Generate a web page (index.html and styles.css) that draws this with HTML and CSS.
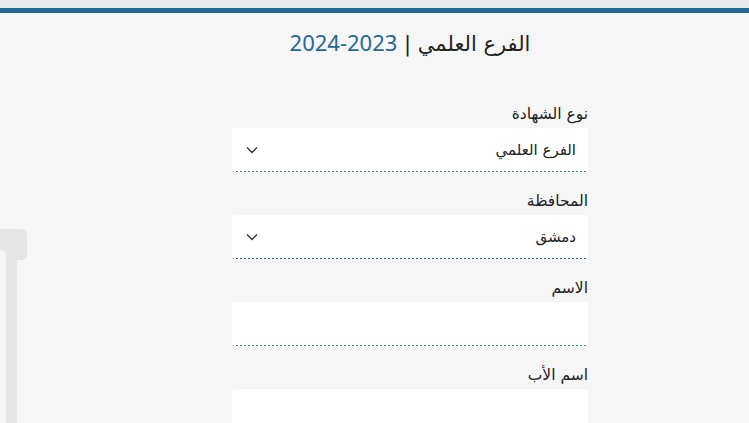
FILE: index.html
```html
<!DOCTYPE html>
<html lang="ar" dir="rtl">
<head>
<meta charset="utf-8">
<link rel="stylesheet" href="styles.css">
</head>
<body>
<div class="topstrip"></div>
<div class="bluebar"></div>
<svg class="deco" width="30" height="200" viewBox="0 229 30 200" aria-hidden="true">
  <path d="M0 229 H21 Q27 229 27 235 V254 Q27 260 21 260 H17 V429 H6 V256 Q6 250 0 250 Z" fill="#e6e6e6"/>
</svg>
<div class="page">
  <main class="column">
    <h1 class="title">الفرع العلمي | <span class="year">2023-2024</span></h1>
    <form class="form">
      <div class="field">
        <label class="label">نوع الشهادة</label>
        <div class="box select blue">
          <span class="value">الفرع العلمي</span>
          <svg class="chev" width="12" height="8" viewBox="0 0 12 8"><path d="M1 1.5 L6 6.5 L11 1.5" fill="none" stroke="#333" stroke-width="1.3"/></svg>
        </div>
      </div>
      <div class="field">
        <label class="label">المحافظة</label>
        <div class="box select dark">
          <span class="value">دمشق</span>
          <svg class="chev" width="12" height="8" viewBox="0 0 12 8"><path d="M1 1.5 L6 6.5 L11 1.5" fill="none" stroke="#333" stroke-width="1.3"/></svg>
        </div>
      </div>
      <div class="field">
        <label class="label">الاسم</label>
        <div class="box blue"></div>
      </div>
      <div class="field">
        <label class="label">اسم الأب</label>
        <div class="box"></div>
      </div>
    </form>
  </main>
</div>
</body>
</html>
```
FILE: styles.css
```css
html, body {
  margin: 0;
  padding: 0;
}
body {
  background: #f6f6f6;
  font-family: "DejaVu Sans", "Noto Sans", sans-serif;
  color: #222;
  overflow: hidden;
  height: 423px;
}
.topstrip {
  height: 8px;
  background: #e8e8e8;
}
.bluebar {
  height: 5px;
  background: #236796;
}
.deco {
  position: absolute;
  left: 0;
  top: 229px;
  display: block;
}
.page {
  display: flex;
  justify-content: center;
  padding-left: 71px;
}
.column {
  width: 356px;
}
.title {
  margin: 14px 0 0;
  font-size: 21px;
  font-weight: 400;
  line-height: 30px;
  height: 30px;
  text-align: center;
  color: #222;
}
.year {
  color: #246797;
  font-family: "Noto Sans", sans-serif;
  font-size: 22px;
}
.form {
  margin-top: 48px;
  display: flex;
  flex-direction: column;
  gap: 20px;
}
.field {
  display: flex;
  flex-direction: column;
}
.label {
  font-size: 15.5px;
  line-height: 18px;
  height: 18px;
  margin-bottom: 5px;
  color: #222;
}
.box {
  height: 44px;
  background: #fff;
  border-radius: 3px;
  box-sizing: border-box;
  padding: 0 12px 0 14px;
  display: flex;
  align-items: center;
  justify-content: space-between;
  background-repeat: repeat-x;
  background-position: left bottom;
  background-size: 4px 1px;
}
.box.blue {
  background-image: linear-gradient(to right, #2f7fb5 50%, transparent 50%);
}
.box.dark {
  background-image: linear-gradient(to right, #36607c 50%, transparent 50%);
}
.value {
  font-size: 15px;
  color: #222;
}
.chev {
  display: block;
}
```
